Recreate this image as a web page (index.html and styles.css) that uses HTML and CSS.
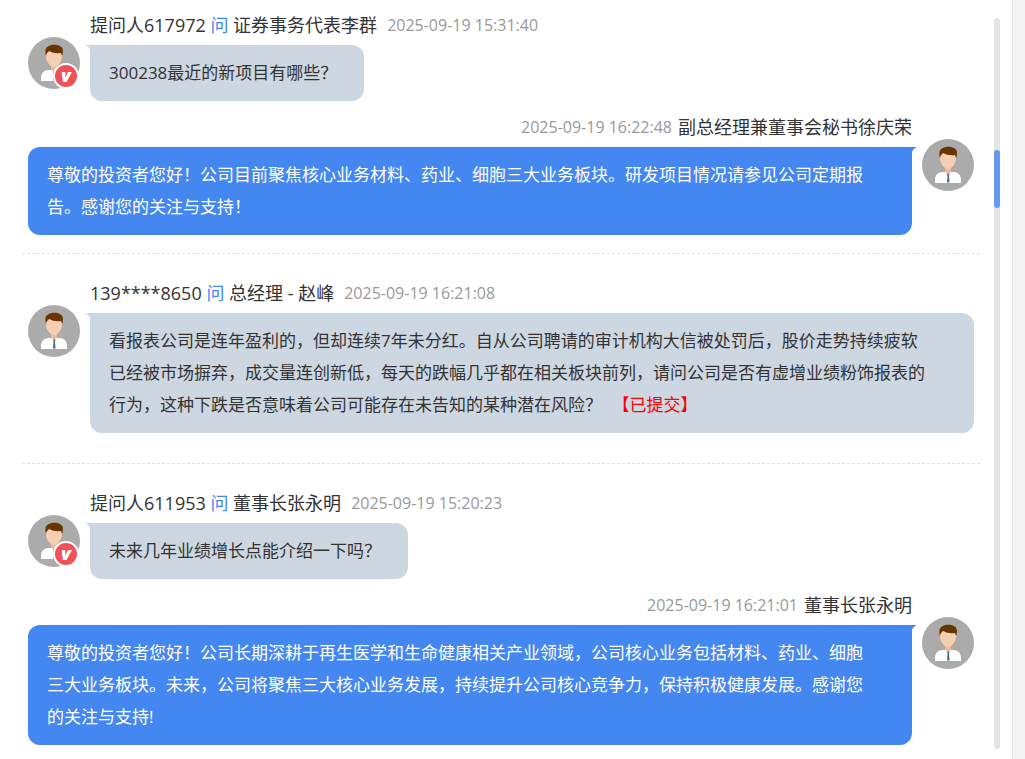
FILE: index.html
```html
<!DOCTYPE html>
<html lang="zh-CN">
<head>
<meta charset="utf-8">
<meta name="viewport" content="width=device-width, initial-scale=1">
<title>投资者问答</title>
<link rel="stylesheet" href="styles.css">
</head>
<body>
<svg class="defs" aria-hidden="true">
  <symbol id="person" viewBox="0 0 52 52">
    <circle cx="26" cy="26" r="26" fill="#ababab"/>
    <path d="M23 26h6v8l-3 3-3-3z" fill="#ecbd9c"/>
    <path d="M13 44v-3c0-5 3-8 8-8h2l3 2 3-2h2c5 0 8 3 8 8v3z" fill="#fff"/>
    <path d="M18 16c0-5 3-6 8-6s8 1 8 6v4c0 4-4 10-8 10s-8-6-8-10z" fill="#f6cfb3"/>
    <path d="M18 19c-1-4-1-8 2-9.500 3-2.500 10-2.500 12.500 0 3 1 3 6 1.500 9.500l-1-3c-4 .5-9 0-11.500-2-2 1-3 2.500-3.500 5z" fill="#693500"/>
    <path d="M25 34.500h2.500l-.5 2 .5 7H25l.5-7z" fill="#4b6b82"/>
  </symbol>
</svg>

<div class="page">
  <main class="chat">
    <article class="thread">
      <header class="meta"><span>提问人617972 <a href="#" class="ask">问</a> 证券事务代表李群</span><time>2025-09-19 15:31:40</time></header>
      <div class="row">
        <div class="avatar"><svg class="face"><use href="#person"/></svg><span class="badge">v</span></div>
        <div class="bubble question"><p>300238最近的新项目有哪些？</p></div>
      </div>
      <header class="meta reply"><time>2025-09-19 16:22:48</time><span>副总经理兼董事会秘书徐庆荣</span></header>
      <div class="row">
        <div class="bubble answer wide"><p>尊敬的投资者您好！公司目前聚焦核心业务材料、药业、细胞三大业务板块。研发项目情况请参见公司定期报告。感谢您的关注与支持！</p></div>
        <div class="avatar"><svg class="face"><use href="#person"/></svg></div>
      </div>
    </article>

    <article class="thread pending">
      <header class="meta"><span>139****8650 <a href="#" class="ask">问</a> 总经理 - 赵峰</span><time>2025-09-19 16:21:08</time></header>
      <div class="row">
        <div class="avatar"><svg class="face"><use href="#person"/></svg></div>
        <div class="bubble question wide"><p>看报表公司是连年盈利的，但却连续7年未分红。自从公司聘请的审计机构大信被处罚后，股价走势持续疲软已经被市场摒弃，成交量连创新低，每天的跌幅几乎都在相关板块前列，请问公司是否有虚增业绩粉饰报表的行为，这种下跌是否意味着公司可能存在未告知的某种潜在风险？ <span class="status">【已提交】</span></p></div>
      </div>
    </article>

    <article class="thread">
      <header class="meta"><span>提问人611953 <a href="#" class="ask">问</a> 董事长张永明</span><time>2025-09-19 15:20:23</time></header>
      <div class="row">
        <div class="avatar"><svg class="face"><use href="#person"/></svg><span class="badge">v</span></div>
        <div class="bubble question"><p>未来几年业绩增长点能介绍一下吗？</p></div>
      </div>
      <header class="meta reply"><time>2025-09-19 16:21:01</time><span>董事长张永明</span></header>
      <div class="row">
        <div class="bubble answer wide"><p>尊敬的投资者您好！公司长期深耕于再生医学和生命健康相关产业领域，公司核心业务包括材料、药业、细胞三大业务板块。未来，公司将聚焦三大核心业务发展，持续提升公司核心竞争力，保持积极健康发展。感谢您的关注与支持!</p></div>
        <div class="avatar"><svg class="face"><use href="#person"/></svg></div>
      </div>
    </article>
  </main>
  <div class="track"><div class="thumb"></div></div>
  <div class="gutter"></div>
</div>
</body>
</html>
```
FILE: styles.css
```css
* {
  box-sizing: border-box;
}

body {
  margin: 0;
  background: #fff;
  color: #333;
  font-family: "Open Sans", "Noto Sans CJK SC", sans-serif;
  font-size: 17px;
  line-height: 32px;
}

p {
  margin: 0;
  max-width: 48em;
}

.defs {
  position: absolute;
  width: 0;
  height: 0;
}

.page {
  display: flex;
  min-height: 100vh;
}

.chat {
  flex: 1;
  min-width: 0;
  padding: 5px 14px 14px 22px;
}

.thread {
  padding: 0 6px 18px;
}

.thread + .thread {
  padding-top: 19px;
  border-top: 1px dashed #e2e2e2;
}

.thread.pending {
  padding-bottom: 30px;
}

.thread:last-child {
  padding-bottom: 0;
}

.meta {
  display: flex;
  align-items: center;
  gap: 10px;
  height: 40px;
  padding: 0 62px;
  font-size: 18px;
}

.meta time {
  color: #999;
  font-size: 16px;
}

.meta.reply {
  justify-content: flex-end;
  gap: 6px;
  margin-top: 6px;
}

.ask {
  color: #4587f0;
  text-decoration: none;
}

.row {
  display: flex;
  align-items: flex-start;
  gap: 10px;
}

.avatar {
  position: relative;
  flex: none;
  width: 52px;
  height: 52px;
  margin-top: -8px;
}

.face {
  display: block;
  width: 52px;
  height: 52px;
}

.badge {
  position: absolute;
  right: 1px;
  bottom: 0;
  width: 26px;
  height: 26px;
  border: 2px solid #fff;
  border-radius: 50%;
  background: #f05156;
  color: #fff;
  font-size: 18px;
  font-style: italic;
  font-weight: 800;
  line-height: 20px;
  text-align: center;
}

.bubble {
  position: relative;
  padding: 12px 27px 12px 19px;
}

.bubble.wide {
  flex: 1;
}

.bubble::before {
  content: "";
  position: absolute;
  top: 0;
  width: 8px;
  height: 8px;
}

.question {
  background: #cdd7e1;
  border-radius: 0 12px 12px 12px;
}

.question::before {
  right: 100%;
  background: radial-gradient(circle at 0 100%, transparent 8px, #cdd7e1 9px);
}

.answer {
  background: #4587f0;
  border-radius: 12px 0 12px 12px;
  color: #fff;
}

.answer::before {
  left: 100%;
  background: radial-gradient(circle at 100% 100%, transparent 8px, #4587f0 9px);
}

.status {
  margin-left: 6px;
  color: #f00;
}

.track {
  position: relative;
  width: 6px;
  margin: 18px 12px 10px 0;
  border-radius: 3px;
  background: #e4e4e4;
}

.thumb {
  position: absolute;
  top: 18%;
  width: 6px;
  height: 8%;
  border-radius: 3px;
  background: #6699ee;
}

.gutter {
  width: 13px;
  border-left: 1px solid #e8e8e8;
  background: #f4f4f4;
}
```
